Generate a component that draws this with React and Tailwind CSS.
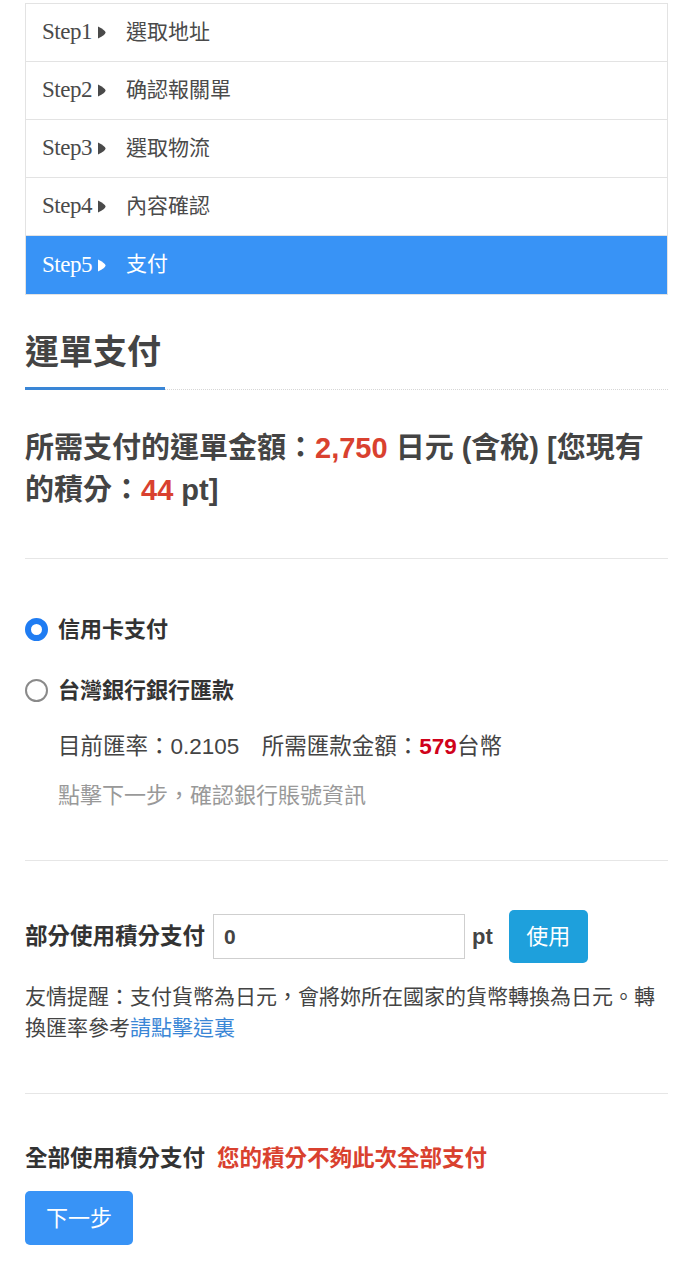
import React from "react";

const steps = [
  { no: "Step1", label: "選取地址" },
  { no: "Step2", label: "确認報關單" },
  { no: "Step3", label: "選取物流" },
  { no: "Step4", label: "內容確認" },
  { no: "Step5", label: "支付", active: true },
];

function Radio({ checked }) {
  return checked ? (
    <span className="inline-block shrink-0 w-[23px] h-[23px] rounded-full border-[6px] border-[#1f7cf2] bg-white" />
  ) : (
    <span className="inline-block shrink-0 w-[23px] h-[23px] rounded-full border-2 border-[#8a8a8a] bg-white" />
  );
}

export default function App() {
  return (
    <div className="bg-white px-[25px] pt-[3px] pb-8 text-[#3f3f3f] font-['Liberation_Sans','Noto_Sans_CJK_TC',sans-serif]">
      {/* Steps */}
      <div className="border border-[#e3e3e3] font-['Liberation_Serif','Noto_Sans_CJK_TC',serif]">
        {steps.map((s) => (
          <div
            key={s.no}
            className={`flex items-center h-[58px] px-4 ${
              s.active
                ? "bg-[#3893f6] text-white"
                : "border-b border-[#e3e3e3] text-[#4a4a4a]"
            }`}
          >
            <span className="text-[23px] tracking-[-0.5px]">{s.no}</span>
            <svg className="ml-[5px]" width="9" height="13" viewBox="0 0 9 13">
              <path d="M1 0.5 C6 3 8.5 5 8.5 6.5 C8.5 8 6 10 1 12.5 Z" fill="currentColor" />
            </svg>
            <span className="ml-[20px] text-[21px]">{s.label}</span>
          </div>
        ))}
      </div>

      {/* Heading */}
      <div className="mt-[37px]">
        <h2 className="text-[34px] font-bold text-[#444] leading-[40px]">運單支付</h2>
        <div className="mt-[15px] flex items-end">
          <div className="w-[140px] h-[3px] bg-[#3a86d6]" />
          <div className="flex-1 border-b border-dotted border-[#d6d6d6]" />
        </div>
      </div>

      {/* Amount */}
      <p className="mt-[37px] text-[29px] font-bold leading-[42px] text-[#444]">
        所需支付的運單金額：<span className="text-[#d9412f]">2,750</span> 日元 (含稅) [您現有
        <br />
        的積分：<span className="text-[#d9412f]">44</span> pt]
      </p>

      <div className="mt-[47px] border-t border-[#e6e6e6]" />

      {/* Payment methods */}
      <div className="mt-[54px] flex items-center gap-[10px] leading-[33px]">
        <Radio checked />
        <span className="text-[22px] font-bold text-[#333]">信用卡支付</span>
      </div>
      <div className="mt-[28px] flex items-center gap-[10px] leading-[33px]">
        <Radio />
        <span className="text-[22px] font-bold text-[#333]">台灣銀行銀行匯款</span>
      </div>
      <div className="mt-[23px] pl-[33px] text-[22.5px] leading-[33px] text-[#444]">
        目前匯率：0.2105　所需匯款金額：<span className="font-bold text-[#d0021b]">579</span>台幣
      </div>
      <div className="mt-[16px] pl-[33px] text-[22px] leading-[33px] text-[#999]">點擊下一步，確認銀行賬號資訊</div>

      <div className="mt-[48px] border-t border-[#e6e6e6]" />

      {/* Partial points */}
      <div className="mt-[49px] flex items-center">
        <span className="text-[22.5px] font-bold text-[#333]">部分使用積分支付</span>
        <input
          defaultValue="0"
          className="ml-[8px] w-[252px] h-[45px] border border-[#cfcfcf] px-[10px] text-[21px] font-bold text-[#444] outline-none"
        />
        <span className="ml-[7px] text-[22px] font-bold text-[#444]">pt</span>
        <button className="ml-[16px] w-[79px] h-[53px] rounded-[5px] bg-[#1ea0dc] text-white text-[22px]">使用</button>
      </div>
      <p className="mt-[18px] text-[21px] leading-[31px] text-[#444]">
        友情提醒：支付貨幣為日元，會將妳所在國家的貨幣轉換為日元。轉換匯率參考
        <a className="text-[#3a86d6]">請點擊這裏</a>
      </p>

      <div className="mt-[50px] border-t border-[#e6e6e6]" />

      {/* All points */}
      <div className="mt-[48px] flex items-center gap-[12px] text-[22.5px] leading-[33px] font-bold">
        <span className="text-[#333]">全部使用積分支付</span>
        <span className="text-[#d9412f]">您的積分不夠此次全部支付</span>
      </div>
      <button className="mt-[16px] w-[108px] h-[54px] rounded-[5px] bg-[#3893f6] text-white text-[22px]">下一步</button>
    </div>
  );
}
